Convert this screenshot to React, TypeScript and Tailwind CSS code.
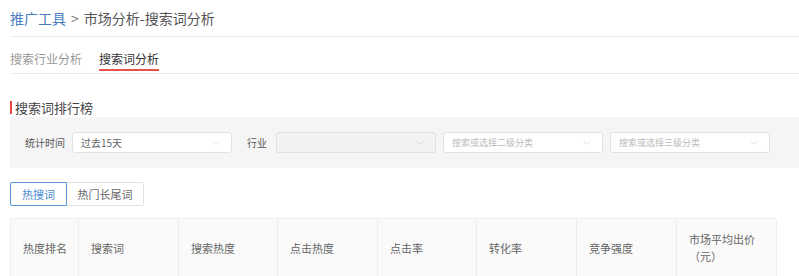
import { ChevronDown } from 'lucide-react'

const font = { fontFamily: '"Noto Sans CJK SC", "Microsoft YaHei", sans-serif' }

function Select({ value, placeholder, disabled, width }: { value?: string; placeholder?: string; disabled?: boolean; width: string }) {
  return (
    <div
      className={`${width} h-[21px] shrink-0 flex items-center justify-between pl-[8px] pr-[9px] rounded-[3px] border ${
        disabled ? 'bg-[#f2f2f2] border-[#e0e0e0]' : 'bg-white border-[#e2e2e2]'
      }`}
    >
      {value ? (
        <span className="text-[10px] text-[#666] leading-none">{value}</span>
      ) : (
        <span className="text-[9px] text-[#bbb] leading-none">{placeholder}</span>
      )}
      <ChevronDown className="w-[12px] h-[12px] text-[#c4c4c4]" strokeWidth={1.2} />
    </div>
  )
}

const columns = [
  { label: '热度排名', w: 'w-[68px]' },
  { label: '搜索词', w: 'w-[100px]' },
  { label: '搜索热度', w: 'w-[99px]' },
  { label: '点击热度', w: 'w-[100px]' },
  { label: '点击率', w: 'w-[99px]' },
  { label: '转化率', w: 'w-[100px]' },
  { label: '竞争强度', w: 'w-[100px]' },
  { label: '市场平均出价（元）', w: 'w-[100px]' },
]

export default function App() {
  return (
    <div className="w-[799px] h-[276px] overflow-hidden bg-white pl-[10px]" style={font}>
      {/* Breadcrumb */}
      <div className="h-[37px] flex items-center border-b border-[#ebebeb] text-[14px] leading-none">
        <span className="text-[#4a7cc0]">推广工具</span>
        <span className="text-[#777] mx-[5px]">&gt;</span>
        <span className="text-[#555]">市场分析-搜索词分析</span>
      </div>

      {/* Tabs */}
      <div className="flex gap-[17px] pt-[13px] pb-[2px] border-b border-[#ebebeb]">
        <div className="text-[12px] leading-[18px] pb-[1px] border-b-2 border-transparent text-[#999]">搜索行业分析</div>
        <div className="text-[12px] leading-[18px] pb-[1px] border-b-2 border-[#e5534b] text-[#333]">搜索词分析</div>
      </div>

      {/* Section title */}
      <div className="mt-[24px] h-[18px] flex items-center gap-[3px]">
        <div className="w-[2px] h-[13px] bg-[#e8453c]" />
        <span className="text-[13px] leading-none text-[#444]">搜索词排行榜</span>
      </div>

      {/* Filters */}
      <div className="mt-[1px] h-[51px] bg-[#f5f5f5] flex items-center pl-[15px]">
        <span className="w-[47px] shrink-0 text-[10px] text-[#555] leading-none">统计时间</span>
        <Select width="w-[160px]" value="过去15天" />
        <span className="w-[44px] shrink-0 pl-[15px] text-[10px] text-[#555] leading-none">行业</span>
        <Select width="w-[160px]" disabled />
        <div className="w-[7px] shrink-0" />
        <Select width="w-[160px]" placeholder="搜索或选择二级分类" />
        <div className="w-[7px] shrink-0" />
        <Select width="w-[160px]" placeholder="搜索或选择三级分类" />
      </div>

      {/* Toggle */}
      <div className="mt-[14px] flex">
        <div className="w-[57px] h-[24px] flex items-center justify-center border border-[#5c97d8] rounded-l-[2px] text-[11px] text-[#4d8ad6] leading-none">
          热搜词
        </div>
        <div className="w-[77px] h-[24px] flex items-center justify-center border border-l-0 border-[#e0e0e0] rounded-r-[2px] text-[11px] text-[#666] leading-none">
          热门长尾词
        </div>
      </div>

      {/* Table */}
      <div className="mt-[12px] flex w-[766px] bg-[#fafafa] border-t border-l border-[#eeeeee]">
        {columns.map((c) => (
          <div
            key={c.label}
            className={`${c.w} shrink-0 border-r border-[#eeeeee] pl-[12px] pr-[6px] py-[12px] flex items-center text-[11px] leading-[17px] text-[#666] min-h-[58px] whitespace-pre-wrap`}
          >
            {c.label === '市场平均出价（元）' ? '市场平均出价\n（元）' : c.label}
          </div>
        ))}
      </div>
    </div>
  )
}
